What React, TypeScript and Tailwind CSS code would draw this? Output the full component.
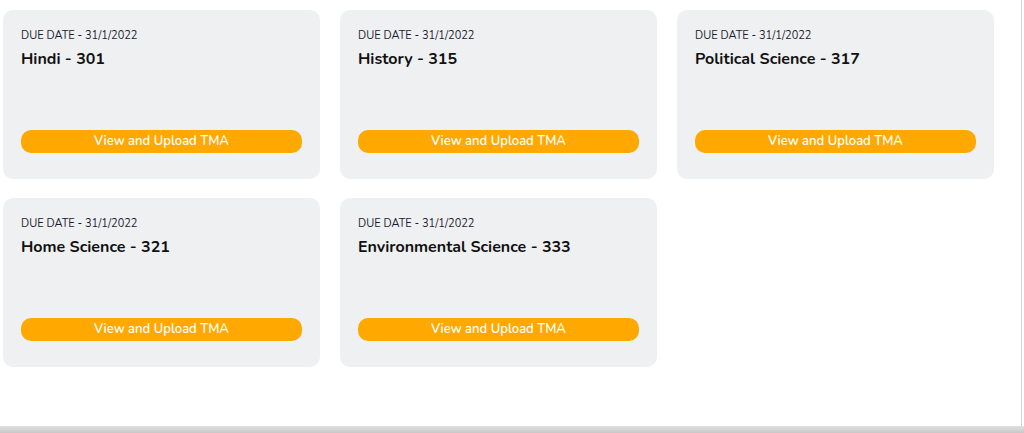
const assignments = [
  { subject: "Hindi", code: 301 },
  { subject: "History", code: 315 },
  { subject: "Political Science", code: 317 },
  { subject: "Home Science", code: 321 },
  { subject: "Environmental Science", code: 333 },
];

function TmaCard({ subject, code }: { subject: string; code: number }) {
  return (
    <div className="flex h-[169px] flex-col rounded-[10px] bg-[#eff0f2] px-[18px] pt-[19px] pb-[26px]">
      <p className="text-[11px] leading-[14px] text-[#1c1c2e]">DUE DATE - 31/1/2022</p>
      <h3 className="mt-[6px] text-[16px] leading-[20px] font-bold text-[#111]">
        {subject} - {code}
      </h3>
      <button className="mt-auto h-[23px] w-full rounded-[10px] bg-[#ffa800] text-[13px] font-semibold text-white">
        View and Upload TMA
      </button>
    </div>
  );
}

export default function App() {
  return (
    <div className="h-[433px] w-[1024px] bg-white font-['Nunito','Lato','Noto_Sans',sans-serif]">
      <div className="h-[426px] w-[1022px] border-r border-[#d4d4d4] pt-[10px] pl-[3px]">
        <div className="grid grid-cols-[317px_317px_317px] gap-x-[20px] gap-y-[19px]">
          {assignments.map((a) => (
            <TmaCard key={a.code} subject={a.subject} code={a.code} />
          ))}
        </div>
      </div>
      <div className="h-[7px] w-full bg-gradient-to-b from-[#e0e0e0] to-[#c8c8c8]" />
    </div>
  );
}
